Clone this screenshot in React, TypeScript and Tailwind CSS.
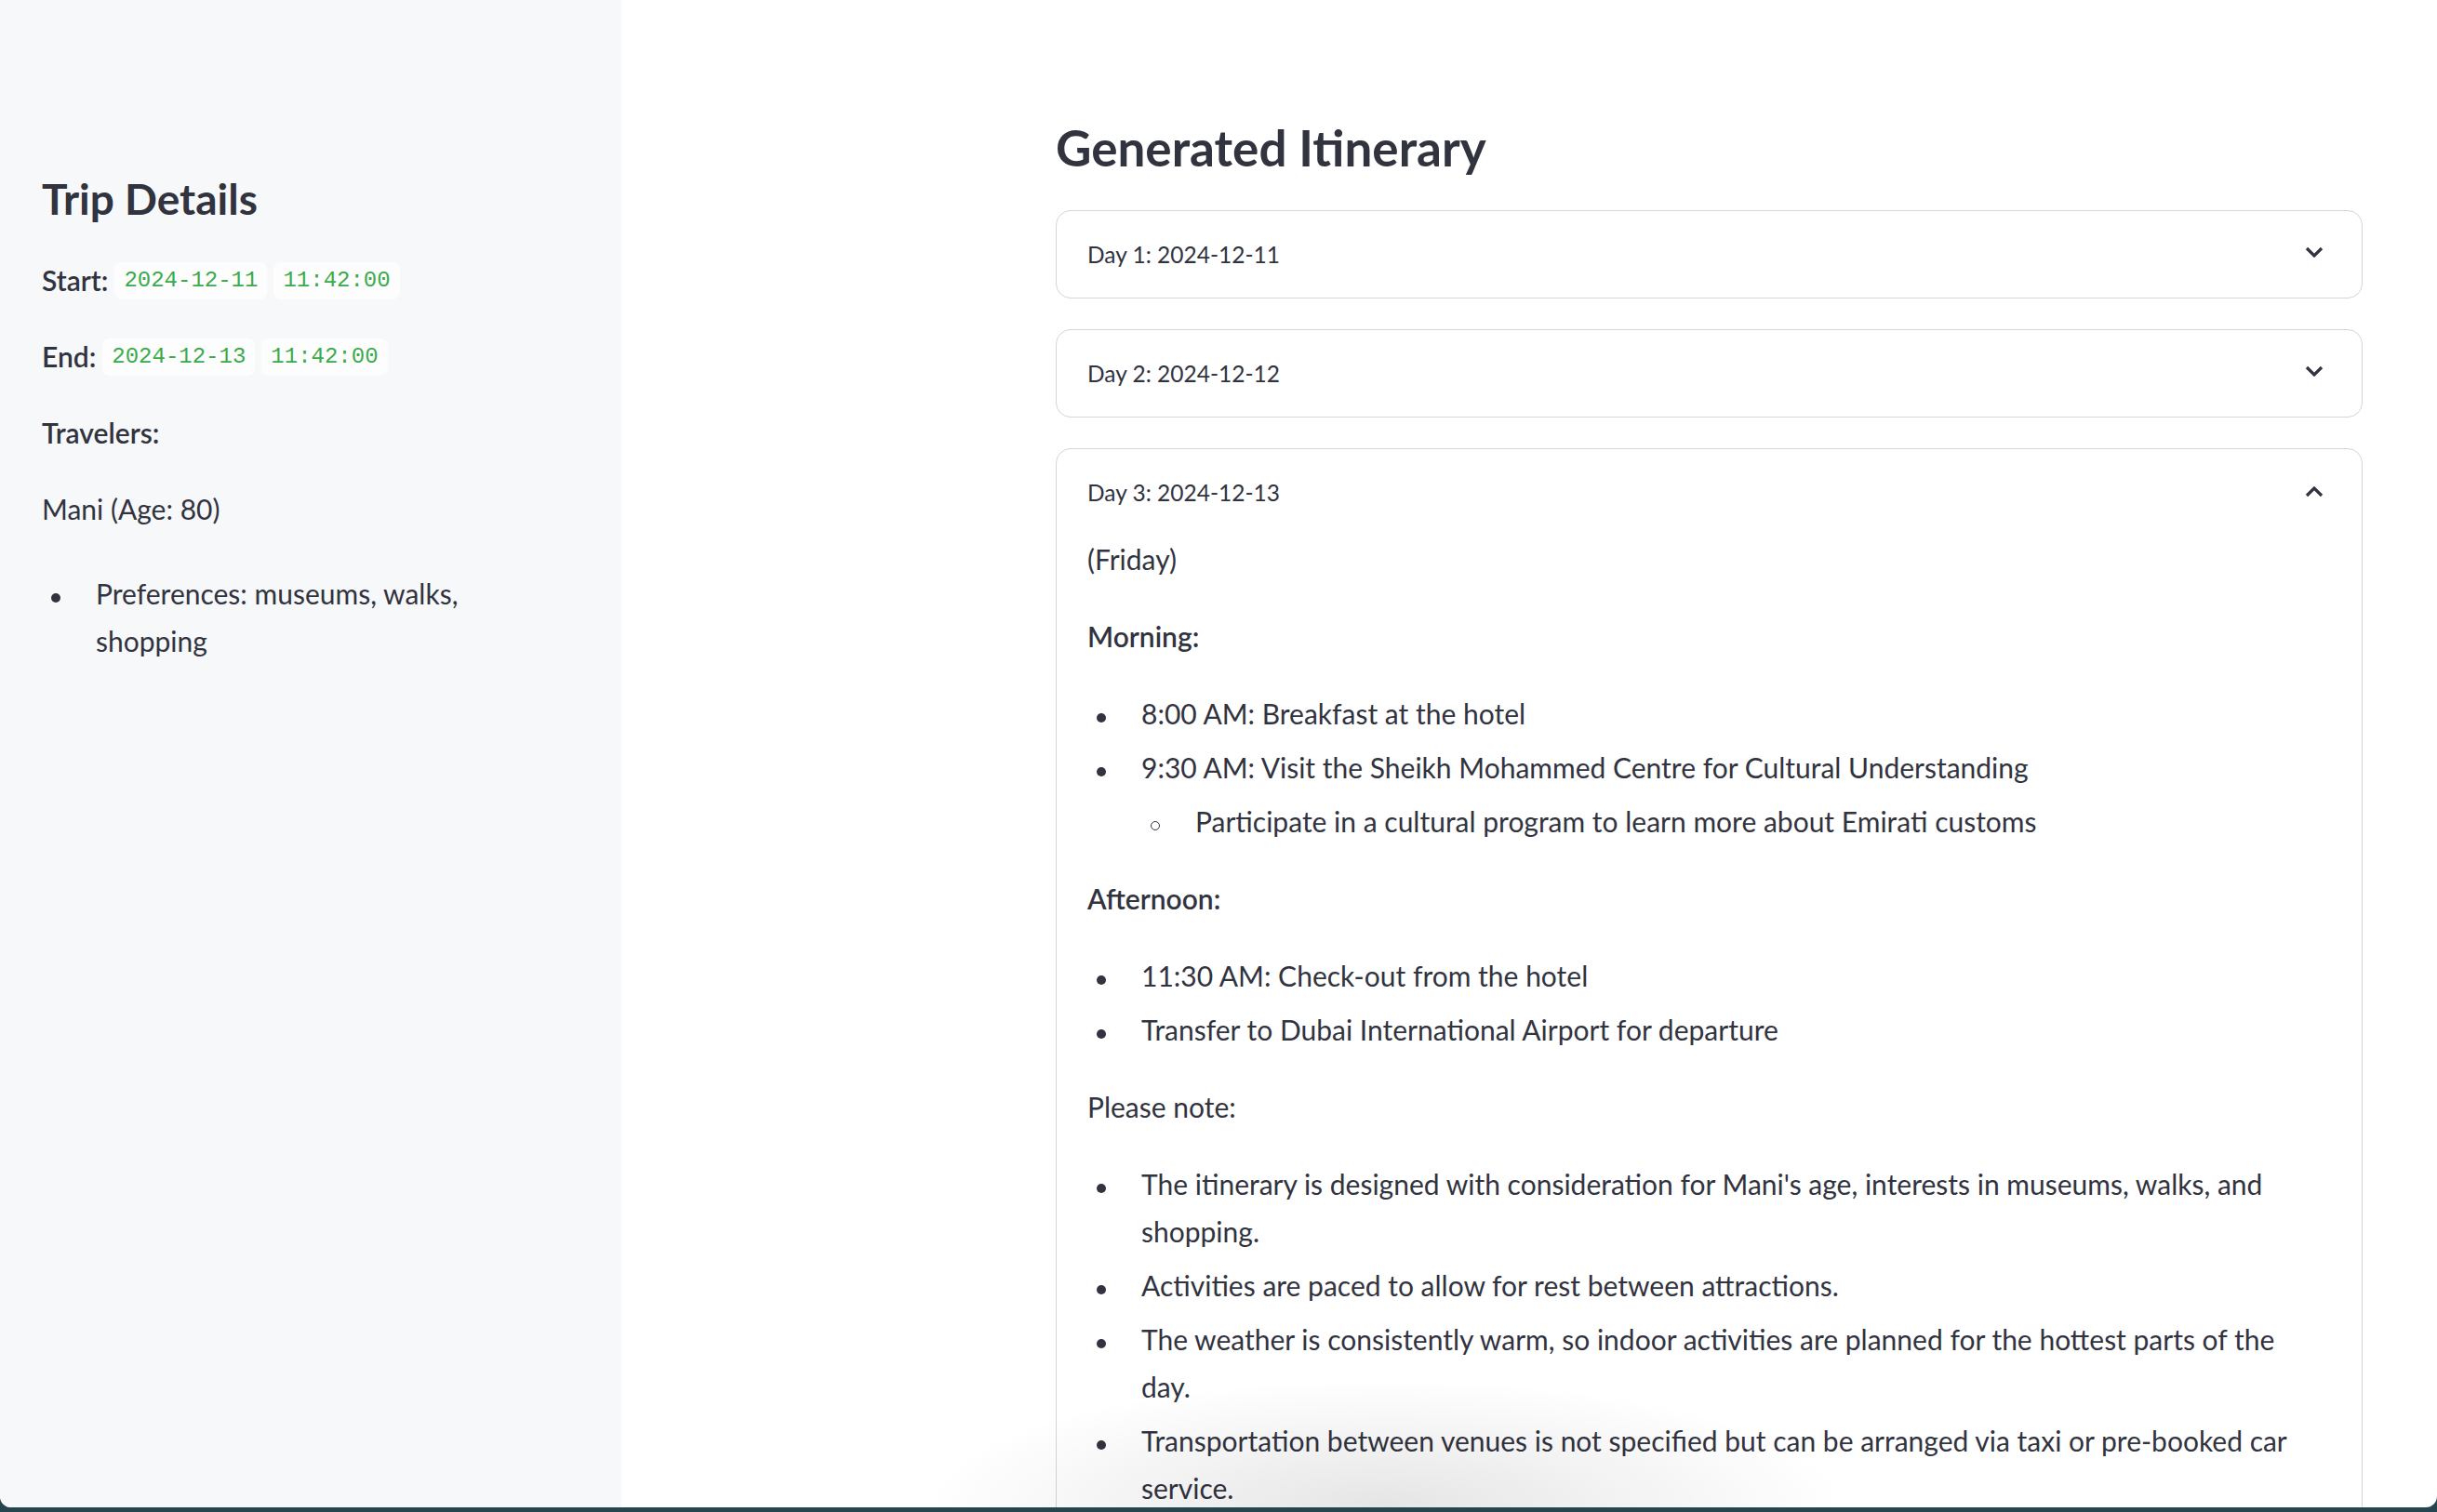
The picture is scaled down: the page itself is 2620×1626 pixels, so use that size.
import type { ReactNode } from "react";

const TEXT = "text-[#31333f]";

function Chevron({ up }: { up?: boolean }) {
  return (
    <svg
      width="20"
      height="12"
      viewBox="0 0 20 12"
      className={up ? "mr-[8px] -translate-y-[1px]" : "mr-[8px] -translate-y-[3px]"}
    >
      <path
        d={up ? "M2 10 L10 2 L18 10" : "M2 2 L10 10 L18 2"}
        fill="none"
        stroke="#31333f"
        strokeWidth="3.2"
      />
    </svg>
  );
}

function Item({ children, hollow }: { children: ReactNode; hollow?: boolean }) {
  return (
    <li className="mt-[7px] flex">
      <span className="flex h-[51px] w-[58px] shrink-0 items-center pl-[10px]">
        <span
          className={
            hollow
              ? "h-[10px] w-[10px] translate-y-[4px] rounded-full border-[1.5px] border-[#31333f]"
              : "h-[10px] w-[10px] translate-y-[4px] rounded-full bg-[#31333f]"
          }
        />
      </span>
      <div className="min-w-0 flex-1">{children}</div>
    </li>
  );
}

function Expander({
  title,
  open,
  children,
}: {
  title: string;
  open?: boolean;
  children?: ReactNode;
}) {
  return (
    <div className="mb-[33px] rounded-[16px] border border-[#d6d6d8]">
      <div className="flex h-[93px] items-center justify-between pl-[33px] pr-[33px]">
        <span className="text-[24.5px]">{title}</span>
        <Chevron up={open} />
      </div>
      {open && <div className="pb-[32px] pl-[33px] pr-[42px]">{children}</div>}
    </div>
  );
}

function Code({ children }: { children: ReactNode }) {
  return (
    <span className="flex h-[40px] items-center rounded-[8px] bg-[#fdfdfe] px-[10px] font-['Liberation_Mono',monospace] text-[24px] text-[#3aab4b]">
      {children}
    </span>
  );
}

export default function App() {
  return (
    <div className="relative h-[1626px] w-[2620px] overflow-hidden bg-[#26464f]">
      <div
        className={`flex h-[1621px] overflow-hidden rounded-b-[12px] bg-white font-['Lato','Noto_Sans',sans-serif] text-[30px] leading-[51px] ${TEXT}`}
      >
        {/* Sidebar */}
        <aside className="w-[668px] shrink-0 bg-[#f7f8fa] pl-[45px] pr-[64px] pt-[186px]">
          <h3 className="mb-[35px] text-[46px] font-bold leading-[55px]">Trip Details</h3>
          <div className="mb-[31px] flex h-[51px] items-center gap-[7px]">
            <strong className="font-semibold">Start:</strong>
            <Code>2024-12-11</Code>
            <Code>11:42:00</Code>
          </div>
          <div className="mb-[31px] flex h-[51px] items-center gap-[7px]">
            <strong className="font-semibold">End:</strong>
            <Code>2024-12-13</Code>
            <Code>11:42:00</Code>
          </div>
          <p className="mb-[31px] font-semibold">Travelers:</p>
          <p className="mb-[40px]">Mani (Age: 80)</p>
          <ul>
            <Item>Preferences: museums, walks, shopping</Item>
          </ul>
        </aside>

        {/* Main */}
        <main className="flex-1 pl-[467px] pt-[125px]">
          <div className="w-[1405px]">
            <h3 className="mb-[34px] text-[53px] font-bold leading-[67px]">Generated Itinerary</h3>
            <Expander title="Day 1: 2024-12-11" />
            <Expander title="Day 2: 2024-12-12" />
            <Expander title="Day 3: 2024-12-13" open>
              <p className="mb-[32px]">(Friday)</p>
              <p className="mb-[32px] font-semibold">Morning:</p>
              <ul className="mb-[32px]">
                <Item>8:00 AM: Breakfast at the hotel</Item>
                <Item>
                  9:30 AM: Visit the Sheikh Mohammed Centre for Cultural Understanding
                  <ul>
                    <Item hollow>Participate in a cultural program to learn more about Emirati customs</Item>
                  </ul>
                </Item>
              </ul>
              <p className="mb-[32px] font-semibold">Afternoon:</p>
              <ul className="mb-[32px]">
                <Item>11:30 AM: Check-out from the hotel</Item>
                <Item>Transfer to Dubai International Airport for departure</Item>
              </ul>
              <p className="mb-[32px]">Please note:</p>
              <ul className="mb-[32px]">
                <Item>
                  The itinerary is designed with consideration for Mani's age, interests in museums, walks, and
                  shopping.
                </Item>
                <Item>Activities are paced to allow for rest between attractions.</Item>
                <Item>
                  The weather is consistently warm, so indoor activities are planned for the hottest parts of the
                  day.
                </Item>
                <Item>
                  Transportation between venues is not specified but can be arranged via taxi or pre-booked car
                  service.
                </Item>
              </ul>
            </Expander>
          </div>
        </main>
      </div>

      {/* soft shadow near the bottom edge */}
      <div className="pointer-events-none absolute bottom-[5px] left-[990px] h-[140px] w-[1000px] bg-[radial-gradient(ellipse_at_50%_100%,rgba(0,0,0,0.1),rgba(0,0,0,0)_70%)]" />
    </div>
  );
}
